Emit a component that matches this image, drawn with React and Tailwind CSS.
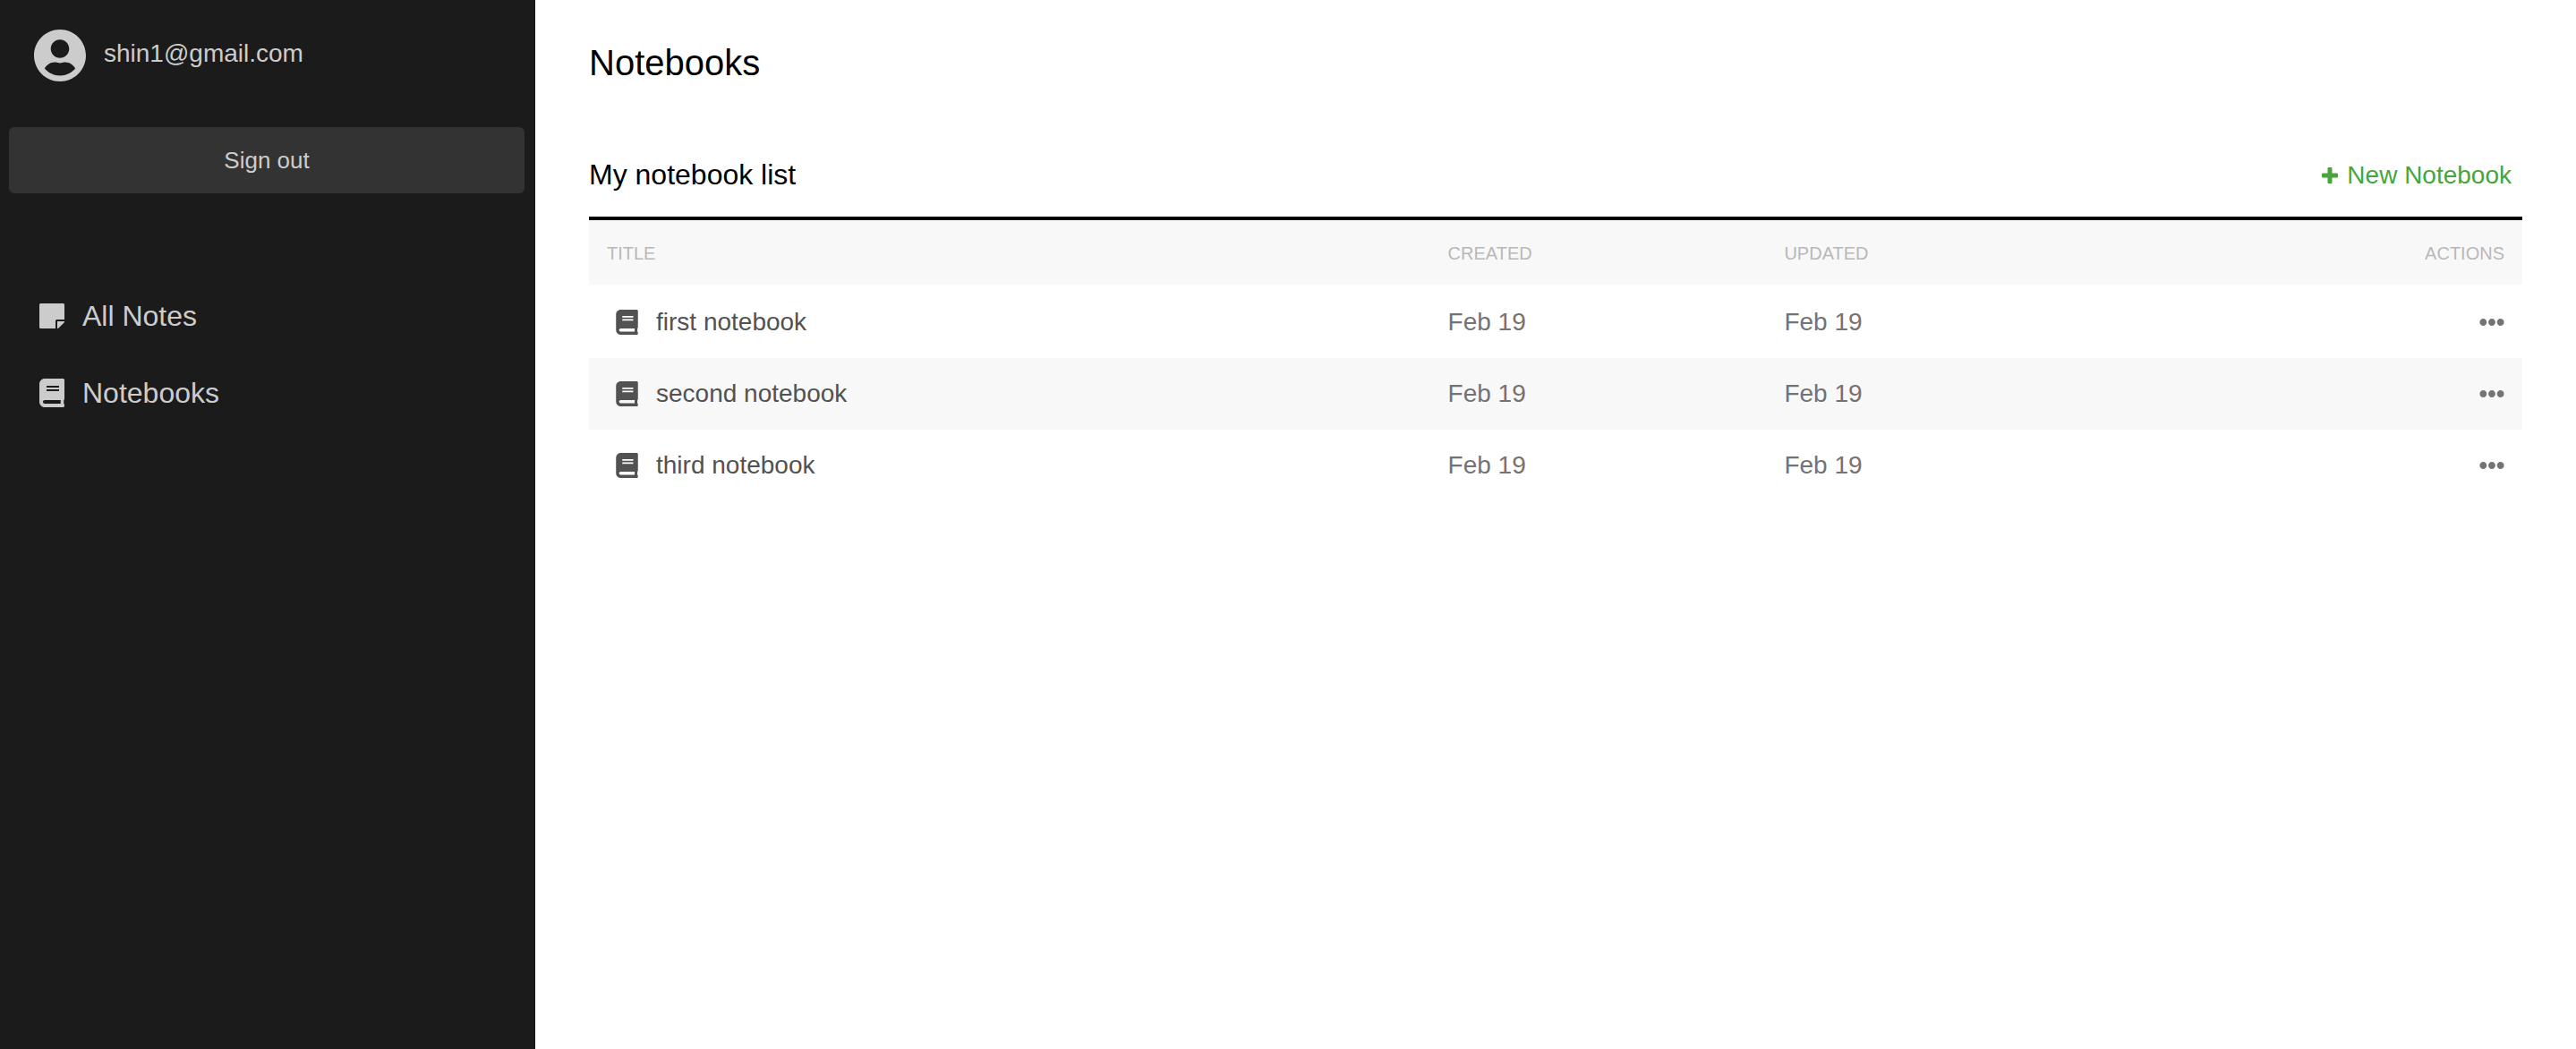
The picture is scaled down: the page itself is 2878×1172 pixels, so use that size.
import { FaBook, FaEllipsisH, FaStickyNote, FaUserCircle } from "react-icons/fa";

const notebooks = [
  { title: "first notebook", created: "Feb 19", updated: "Feb 19" },
  { title: "second notebook", created: "Feb 19", updated: "Feb 19" },
  { title: "third notebook", created: "Feb 19", updated: "Feb 19" },
];

function PlusIcon() {
  return (
    <svg viewBox="0 0 18 18" className="size-[18px]" fill="currentColor" aria-hidden="true">
      <rect x="6.5" y="0" width="5" height="18" rx="1" />
      <rect x="0" y="6.5" width="18" height="5" rx="1" />
    </svg>
  );
}

function NavLink({ icon: Icon, label }) {
  return (
    <a href="#" className="flex h-[86px] items-center gap-5 px-11">
      <Icon className="h-8 w-7" />
      <span className="text-[32px] leading-10">{label}</span>
    </a>
  );
}

function Sidebar() {
  return (
    <aside className="w-[598px] shrink-0 bg-[#1b1b1b] text-[#cccccc]">
      <div className="flex h-[142px] items-start gap-5 px-[38px] pt-8">
        <FaUserCircle className="h-[60px] w-[58px]" />
        <span className="pt-3 text-[28px] leading-8">shin1@gmail.com</span>
      </div>
      <div className="pr-3 pl-[10px]">
        <button className="h-[74px] w-full rounded-md bg-[#333333] text-[26px] leading-8">Sign out</button>
      </div>
      <nav className="pt-[94px]">
        <NavLink icon={FaStickyNote} label="All Notes" />
        <NavLink icon={FaBook} label="Notebooks" />
      </nav>
    </aside>
  );
}

function NotebookTable() {
  return (
    <table className="w-full table-fixed text-left text-[28px] text-[#737373]">
      <thead className="bg-[#f8f8f8] text-[20px] leading-6 text-[#b8b8b8] uppercase">
        <tr className="h-[72px] *:pt-0.5">
          <th className="w-[43.5%] px-5 font-normal">Title</th>
          <th className="w-[17.4%] px-5 font-normal">Created</th>
          <th className="w-[17.4%] px-5 font-normal">Updated</th>
          <th className="px-5 text-right font-normal">Actions</th>
        </tr>
      </thead>
      <tbody>
        {notebooks.map((n) => (
          <tr key={n.title} className="h-20 first:h-[82px] first:*:pt-0.5 even:bg-[#f8f8f8]">
            <td className="px-5">
              <a href="#" className="flex items-center gap-5 pl-[10px] text-[#525252]">
                <FaBook className="h-7 w-[25px]" />
                <span className="leading-8">{n.title}</span>
              </a>
            </td>
            <td className="px-5">{n.created}</td>
            <td className="px-5">{n.updated}</td>
            <td className="px-5">
              <button aria-label="Notebook actions" className="ml-auto block">
                <FaEllipsisH className="size-7" />
              </button>
            </td>
          </tr>
        ))}
      </tbody>
    </table>
  );
}

export default function App() {
  return (
    <div className="flex min-h-screen bg-white font-['Liberation_Sans',Arial,sans-serif]">
      <Sidebar />
      <main className="min-w-0 flex-1 px-[60px] pt-[46px] text-black">
        <h1 className="text-[40px] leading-12">Notebooks</h1>
        <section className="pt-[76px]">
          <div className="flex h-[76px] items-start justify-between border-b-4 border-black pr-3">
            <h2 className="pt-[5px] text-[32px] leading-10">My notebook list</h2>
            <button className="flex items-center gap-[10px] pt-[10px] text-[28px] leading-8 text-[#46a53b]">
              <PlusIcon />
              New Notebook
            </button>
          </div>
          <NotebookTable />
        </section>
      </main>
    </div>
  );
}
